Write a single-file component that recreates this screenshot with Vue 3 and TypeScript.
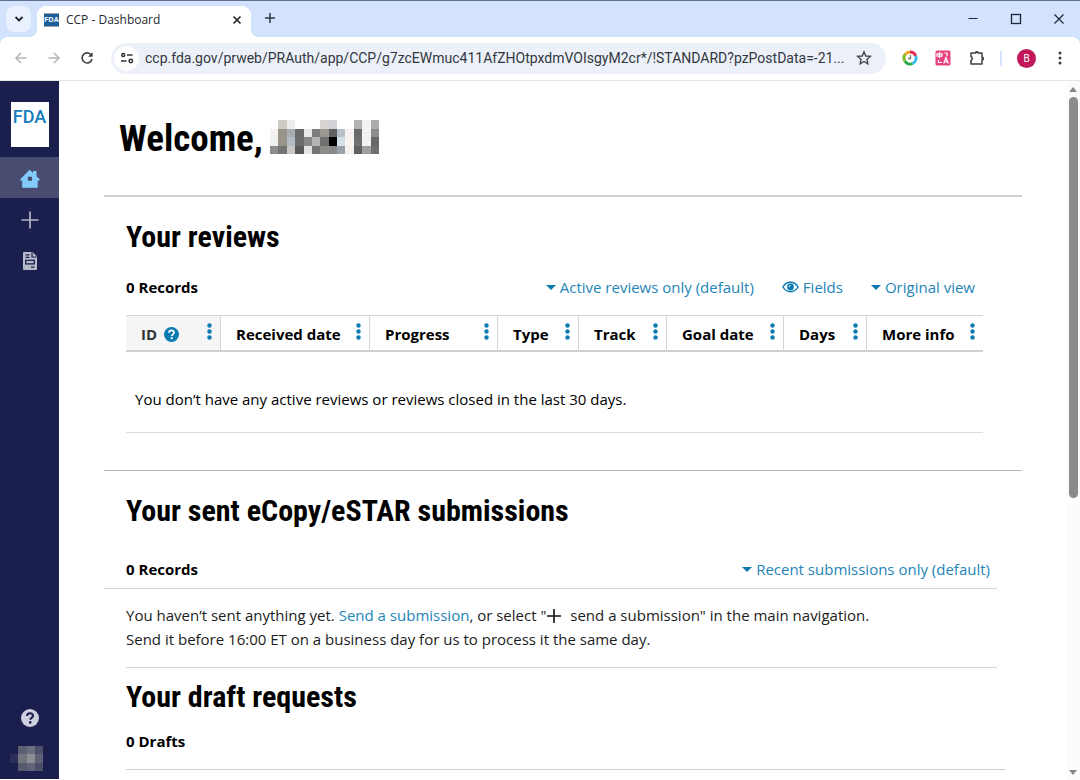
<script setup lang="ts">
import { ref } from 'vue'

interface Column {
  label: string
  width: number
  help?: boolean
}

const address = ref(
  'ccp.fda.gov/prweb/PRAuth/app/CCP/g7zcEWmuc411AfZHOtpxdmVOIsgyM2cr*/!STANDARD?pzPostData=-21...'
)

const columns: Column[] = [
  { label: 'ID', width: 95, help: true },
  { label: 'Received date', width: 149 },
  { label: 'Progress', width: 128 },
  { label: 'Type', width: 81 },
  { label: 'Track', width: 88 },
  { label: 'Goal date', width: 117 },
  { label: 'Days', width: 83 },
  { label: 'More info', width: 116 }
]

const nameTiles: string[][] = [
  ['#ffffff', '#cfcac4', '#ececec', '#ffffff', '#ffffff', '#ffffff', '#d8d4d0', '#d2d2d6', '#ffffff', '#ffffff', '#b2b2b2', '#f2f2f2', '#acacac'],
  ['#f4f2f0', '#999488', '#a8acb0', '#6a6a6a', '#e8e8e8', '#7c7c7c', '#9c9890', '#606060', '#b8c0c8', '#f7f2f0', '#6a6a6a', '#f2f2f2', '#8c8c8c'],
  ['#f0f0f0', '#9a9488', '#b4bcc4', '#6c6c6c', '#888888', '#b4b4b4', '#707070', '#000000', '#d4e0e8', '#faf4f0', '#707070', '#f2f2f2', '#686868'],
  ['#8c8c8c', '#747474', '#c8c8c8', '#585858', '#e4e4e4', '#747474', '#8c8c88', '#888888', '#98a0a8', '#f6f0ec', '#606060', '#a0a0a0', '#707070']
]

const avatarTiles: string[][] = [
  ['#1b1f4e', '#5b5f72', '#6c6f7d', '#4c506a'],
  ['#2c2f58', '#74767f', '#8e8f94', '#5f6274'],
  ['#1b1f4e', '#565a6e', '#62657a', '#4a4e68']
]
</script>

<template>
  <div class="window">
    <header class="tabstrip">
      <button class="tab-search" aria-label="Search tabs">
        <svg width="10" height="10" viewBox="0 0 10 10"><path d="M1.5 3 5 6.500 8.500 3" fill="none" stroke="#1f2430" stroke-width="1.800" /></svg>
      </button>
      <div class="tab">
        <span class="favicon">FDA</span>
        <span class="tab-title">CCP - Dashboard</span>
        <button class="tab-close" aria-label="Close tab">
          <svg width="10" height="10" viewBox="0 0 10 10"><path d="M1.500 1.500 8.500 8.500M8.500 1.500 1.500 8.500" stroke="#202124" stroke-width="1.600" /></svg>
        </button>
      </div>
      <button class="new-tab" aria-label="New tab">
        <svg width="12" height="12" viewBox="0 0 12 12"><path d="M6 1v10M1 6h10" stroke="#30343c" stroke-width="1.500" /></svg>
      </button>
      <div class="controls">
        <button aria-label="Minimize"><svg width="12" height="12" viewBox="0 0 12 12"><path d="M1.500 5.500h9" stroke="#1d2433" /></svg></button>
        <button aria-label="Maximize"><svg width="12" height="12" viewBox="0 0 12 12"><rect x="1.500" y="1.500" width="9" height="9" fill="none" stroke="#1d2433" stroke-width="1.300" /></svg></button>
        <button aria-label="Close"><svg width="12" height="12" viewBox="0 0 12 12"><path d="M1.500 1.500l9 9M10.500 1.500l-9 9" stroke="#1d2433" stroke-width="1.200" /></svg></button>
      </div>
    </header>

    <div class="toolbar">
      <button class="nav-btn" aria-label="Back">
        <svg width="16" height="16" viewBox="0 0 16 16"><path d="M13.500 8H3M8 3 3 8l5 5" fill="none" stroke="#b4b6ba" stroke-width="1.500" /></svg>
      </button>
      <button class="nav-btn" aria-label="Forward">
        <svg width="16" height="16" viewBox="0 0 16 16"><path d="M2.500 8H13M8 3l5 5-5 5" fill="none" stroke="#b4b6ba" stroke-width="1.500" /></svg>
      </button>
      <button class="nav-btn" aria-label="Reload">
        <svg width="16" height="16" viewBox="0 0 16 16"><path d="M12.600 5.800A5 5 0 1 0 13 8.800" fill="none" stroke="#3c4043" stroke-width="1.600" /><path d="M13.600 2.200v4.600H9z" fill="#3c4043" /></svg>
      </button>
      <div class="omnibox">
        <button class="site-info" aria-label="Site information">
          <svg width="14" height="12" viewBox="0 0 14 12" fill="none" stroke="#30343a" stroke-width="1.500"><circle cx="3.200" cy="3" r="1.500" /><path d="M7 3h5.500M1 9h5.500" /><circle cx="10.800" cy="9" r="1.700" /></svg>
        </button>
        <input v-model="address" class="address" type="text" aria-label="Address" spellcheck="false" />
        <button class="star" aria-label="Bookmark">
          <svg width="16" height="16" viewBox="0 0 16 16"><path d="m8 1.800 1.800 4.200 4.500.4-3.400 3 1 4.500L8 11.500l-3.900 2.400 1-4.500-3.400-3 4.500-.4z" fill="none" stroke="#44474c" stroke-width="1.400" /></svg>
        </button>
      </div>
      <div class="extensions">
        <button aria-label="Clock extension">
          <svg width="16" height="16" viewBox="0 0 16 16" fill="none" stroke-width="3">
            <path d="M8 2a6 6 0 0 1 5.700 4" stroke="#e32f51" />
            <path d="M13.700 6A6 6 0 0 1 10.500 13.500" stroke="#35bdf0" />
            <path d="M10.500 13.500A6 6 0 0 1 3 11.200" stroke="#28a745" />
            <path d="M3 11.200A6 6 0 0 1 3.300 4.200" stroke="#7fbd2c" />
            <path d="M3.300 4.200A6 6 0 0 1 8 2" stroke="#f6a51c" />
            <path d="M8.500 5v3.500H6" stroke="#777777" stroke-width="1.300" />
          </svg>
        </button>
        <button aria-label="Translate extension">
          <svg width="16" height="16" viewBox="0 0 16 16" fill="none" stroke="#ffffff" stroke-width="1.200">
            <rect width="15" height="15" x=".5" y=".5" rx="1.500" fill="#e6437f" stroke="none" />
            <path d="M2 3.800h5v2.400H2zM4.500 2v6.300M9.500 3H12v3M3.500 10v2.500H7M8.700 13.500l2.300-6 2.300 6M9.500 11.700h3" />
          </svg>
        </button>
        <button aria-label="Extensions">
          <svg width="18" height="18" viewBox="0 0 18 18"><path d="M3 4h4.200a1.700 1.700 0 0 1 3.200 0H14v4.300a1.400 1.400 0 0 1 0 2.800V15H3v-3.500a2.200 2.200 0 0 0 0-4z" fill="none" stroke="#3c4043" stroke-width="1.500" stroke-linejoin="round" /><path d="M7 4.300a1.800 1.800 0 0 1 3.600 0M13.700 7.800a1.800 1.800 0 0 1 0 3.600" fill="#3c4043" /></svg>
        </button>
      </div>
      <span class="divider"></span>
      <button class="profile" aria-label="Profile">B</button>
      <button class="more" aria-label="Menu">
        <svg width="4" height="14" viewBox="0 0 4 14" fill="#3c4043"><circle cx="2" cy="2" r="1.500" /><circle cx="2" cy="7" r="1.500" /><circle cx="2" cy="12" r="1.500" /></svg>
      </button>
    </div>

    <div class="viewport">
      <nav class="sidebar" aria-label="Main navigation">
        <a class="logo" href="#">FDA</a>
        <a class="nav-item active" href="#" aria-label="Home">
          <svg width="20" height="20" viewBox="0 0 20 20"><path fill-rule="evenodd" d="M9.700.8 13 4V2h3.500v5.200L20 10.400l-.8 1h-1.500V18.700H2.200v-7.300H.6l-.6-1zM7.800 7.700v4h4.200v-4z" fill="#82cbfc" /></svg>
        </a>
        <a class="nav-item" href="#" aria-label="Send a submission">
          <svg width="18" height="18" viewBox="0 0 18 18"><path d="M9 .5v17M.5 9h17" stroke="#b5b7ca" stroke-width="1.700" /></svg>
        </a>
        <a class="nav-item" href="#" aria-label="Documents">
          <svg width="16" height="20" viewBox="0 0 16 20"><path d="M2 1h8.500L15 5.500V18a1 1 0 0 1-1 1H2a1 1 0 0 1-1-1V2a1 1 0 0 1 1-1z" fill="#b9bac8" /><path d="M10 1.500V6h4.500M3.500 3.800h4M3.500 6.300h4M9 16.200h3.500" fill="none" stroke="#1b1f4e" stroke-width="1.200" /><rect x="3.700" y="9.300" width="8.600" height="3.600" fill="none" stroke="#1b1f4e" stroke-width="1.300" /></svg>
        </a>
        <span class="grow"></span>
        <a class="nav-foot" href="#" aria-label="Help">
          <svg width="18" height="18" viewBox="0 0 18 18"><circle cx="9" cy="9" r="9" fill="#cdcfdf" /><path d="M6 7c0-3.700 6-3.700 6-.3 0 2.200-2.700 2-2.700 4.100" fill="none" stroke="#1b1f4e" stroke-width="2.100" /><circle cx="9.200" cy="13.400" r="1.300" fill="#1b1f4e" /></svg>
        </a>
        <a class="nav-foot" href="#" aria-label="Account">
          <svg class="avatar" width="33" height="25" viewBox="0 0 4 3" preserveAspectRatio="none" shape-rendering="crispEdges">
            <template v-for="(row, y) in avatarTiles" :key="y">
              <rect v-for="(fill, x) in row" :key="x" :x="x" :y="y" width="1" height="1" :fill="fill" />
            </template>
          </svg>
        </a>
      </nav>

      <main class="content">
        <h1 class="welcome">
          <span>Welcome,</span>
          <svg width="109" height="34" viewBox="0 0 13 4" preserveAspectRatio="none" shape-rendering="crispEdges" aria-hidden="true">
            <template v-for="(row, y) in nameTiles" :key="y">
              <rect v-for="(fill, x) in row" :key="x" :x="x" :y="y" width="1" height="1" :fill="fill" />
            </template>
          </svg>
        </h1>

        <section class="reviews">
          <h2>Your reviews</h2>
          <div class="bar">
            <strong>0 Records</strong>
            <div class="tools">
              <button class="link"><i class="caret"></i>Active reviews only (default)</button>
              <button class="link">
                <svg width="17" height="12" viewBox="0 0 17 12"><path d="M1 6c3.500-6.300 11.500-6.300 15 0-3.500 6.300-11.500 6.300-15 0z" fill="none" stroke="#0b7ab3" stroke-width="1.500" /><circle cx="8.500" cy="6" r="3.400" fill="#0b7ab3" /><path d="M7 6a1.500 1.500 0 0 1 1.500-1.500" fill="none" stroke="#ffffff" /></svg>Fields
              </button>
              <button class="link"><i class="caret"></i>Original view</button>
            </div>
          </div>
          <table>
            <colgroup>
              <col v-for="c in columns" :key="c.label" :style="{ width: c.width + 'px' }" />
            </colgroup>
            <thead>
              <tr>
                <th v-for="c in columns" :key="c.label" scope="col" :class="{ sorted: c.help }">
                  <div class="cell">
                    <span>{{ c.label }}</span>
                    <button v-if="c.help" class="help" aria-label="About ID">
                      <svg width="15" height="15" viewBox="0 0 18 18"><circle cx="9" cy="9" r="9" fill="#0b7ab3" /><path d="M6 7c0-3.700 6-3.700 6-.3 0 2.200-2.700 2-2.700 4.100" fill="none" stroke="#ffffff" stroke-width="2.100" /><circle cx="9.200" cy="13.400" r="1.300" fill="#ffffff" /></svg>
                    </button>
                    <button class="kebab" :aria-label="c.label + ' menu'">
                      <svg width="5" height="17" viewBox="0 0 5 17" fill="#0b7ab3"><circle cx="2.500" cy="2.500" r="2.200" /><circle cx="2.500" cy="8.500" r="2.200" /><circle cx="2.500" cy="14.500" r="2.200" /></svg>
                    </button>
                  </div>
                </th>
              </tr>
            </thead>
            <tbody>
              <tr>
                <td :colspan="columns.length">You don’t have any active reviews or reviews closed in the last 30 days.</td>
              </tr>
            </tbody>
          </table>
        </section>

        <section class="sent">
          <h2>Your sent eCopy/eSTAR submissions</h2>
          <div class="bar ruled">
            <strong>0 Records</strong>
            <button class="link"><i class="caret"></i>Recent submissions only (default)</button>
          </div>
          <p>
            You haven’t sent anything yet. <a href="#">Send a submission</a>, or select "<svg class="plus" width="16" height="16" viewBox="0 0 16 16"><path d="M8 1v14M1 8h14" stroke="#111111" stroke-width="1.600" /></svg> send a submission" in the main navigation.<br />
            Send it before 16:00 ET on a business day for us to process it the same day.
          </p>
        </section>

        <section class="drafts">
          <h2>Your draft requests</h2>
          <strong>0 Drafts</strong>
        </section>
      </main>

      <div class="scrollbar" aria-hidden="true">
        <i class="arrow up"></i>
        <span class="thumb"></span>
        <span class="rest"></span>
        <i class="arrow down"></i>
      </div>
    </div>
  </div>
</template>

<style>
body {
  margin: 0;
  background: #ffffff;
}
</style>

<style scoped>
* {
  box-sizing: border-box;
}
.window {
  height: 100vh;
  display: flex;
  flex-direction: column;
  overflow: hidden;
  font-family: 'Open Sans', 'Noto Sans', sans-serif;
  font-size: 15px;
  color: #000000;
  background: #d3e2fd;
}
button {
  display: inline-flex;
  align-items: center;
  justify-content: center;
  padding: 0;
  border: 0;
  background: none;
  font: inherit;
  color: inherit;
  flex: none;
}
svg {
  display: block;
  flex: none;
}

/* Browser tab strip */
.tabstrip {
  display: flex;
  flex: none;
  height: 37px;
  padding-left: 6px;
  border-top: 1px solid #5f6f8f;
}
.tab-search {
  width: 25px;
  height: 26px;
  margin-top: 5px;
  border-radius: 8px;
  background: #e9f1fe;
}
.tab {
  position: relative;
  display: flex;
  align-items: center;
  width: 214px;
  height: 31px;
  margin: 5px 0 0 6px;
  padding: 0 7px 4px 7px;
  border-radius: 9px 9px 0 0;
  background: #ffffff;
}
.tab::before,
.tab::after {
  content: '';
  position: absolute;
  bottom: 0;
  width: 8px;
  height: 8px;
}
.tab::before {
  left: -8px;
  background: radial-gradient(circle at 0 0, transparent 8px, #ffffff 8px);
}
.tab::after {
  right: -8px;
  background: radial-gradient(circle at 100% 0, transparent 8px, #ffffff 8px);
}
.favicon {
  width: 15px;
  height: 14px;
  margin-right: 7px;
  overflow: hidden;
  background: #1c5d9c;
  border-top: 1px solid #9aa0a8;
  border-bottom: 1px solid #9aa0a8;
  color: #ffffff;
  font: 700 7px/12px 'Liberation Sans', sans-serif;
  text-align: center;
}
.tab-title {
  flex: 1;
  font-size: 12px;
  line-height: 18px;
  color: #1f2937;
  white-space: nowrap;
}
.tab-close {
  width: 14px;
  height: 14px;
}
.new-tab {
  width: 24px;
  height: 24px;
  margin: 5px 0 0 7px;
}
.controls {
  display: flex;
  margin-left: auto;
}
.controls button {
  width: 43px;
  height: 35px;
}

/* Browser toolbar */
.toolbar {
  display: flex;
  flex: none;
  align-items: center;
  height: 44px;
  padding: 0 10px 1px 4px;
  border-radius: 8px 8px 0 0;
  border-bottom: 1px solid #e4e6ea;
  background: #ffffff;
}
.nav-btn {
  width: 33px;
  height: 32px;
}
.omnibox {
  display: flex;
  align-items: center;
  flex: 1;
  min-width: 0;
  height: 31px;
  margin-left: 8px;
  padding: 0 14px 0 3px;
  border-radius: 16px;
  background: #ecf1f9;
}
.site-info {
  width: 25px;
  height: 25px;
  border-radius: 50%;
  background: #ffffff;
}
.address {
  flex: 1;
  min-width: 0;
  height: 28px;
  margin: 0 4px 0 6px;
  padding: 0;
  border: 0;
  outline: 0;
  background: none;
  font-family: Roboto, sans-serif;
  font-size: 14px;
  color: #33373d;
  text-overflow: ellipsis;
}
.extensions {
  display: flex;
  align-items: center;
  gap: 17px;
  margin: 0 14px 0 16px;
}
.divider {
  width: 2px;
  height: 15px;
  background: #d3e2fd;
}
.profile {
  width: 19px;
  height: 19px;
  margin: 0 14px 0 15px;
  border-radius: 50%;
  background: #c2185b;
  color: #ffffff;
  font: 10px/19px Roboto, sans-serif;
}
.more {
  width: 20px;
  height: 24px;
}

/* Page */
.viewport {
  display: flex;
  flex: 1;
  min-height: 0;
  background: #ffffff;
}
.sidebar {
  display: flex;
  flex-direction: column;
  align-items: center;
  flex: none;
  width: 59px;
  margin-bottom: 1px;
  padding-top: 21px;
  background: #1b1f4e;
}
.logo {
  width: 38px;
  height: 45px;
  margin-bottom: 10px;
  padding-top: 5px;
  background: #ffffff;
  color: #157cbc;
  font: 500 18px/20px Roboto, sans-serif;
  text-align: center;
  text-decoration: none;
}
.nav-item,
.nav-foot {
  display: flex;
  align-items: center;
  justify-content: center;
  width: 100%;
  height: 41px;
}
.nav-item {
  padding-top: 2px;
}
.nav-item.active {
  background: #494c71;
}
.nav-foot {
  height: 40px;
  padding-bottom: 2px;
}
.avatar {
  margin-right: 6px;
}
.grow {
  flex: 1;
}
.content {
  flex: 1;
  min-width: 0;
  overflow: hidden;
  padding: 0 44px 0 45px;
}
h1,
h2 {
  margin: 0;
  font-family: 'Roboto Condensed', 'Liberation Sans Narrow', Roboto, sans-serif;
  font-weight: 700;
}
.welcome {
  display: flex;
  align-items: flex-end;
  gap: 7px;
  height: 116px;
  padding: 0 0 41px 15px;
  border-bottom: 2px solid #cfcfcf;
  font-size: 37px;
  line-height: 30px;
}
h2 {
  font-size: 30px;
  line-height: 36px;
}
strong {
  font-weight: 700;
  font-size: 15px;
  line-height: 24px;
}
.bar {
  display: flex;
  align-items: center;
  justify-content: space-between;
}
.tools {
  display: flex;
  gap: 28px;
}
.link {
  gap: 4px;
  line-height: 24px;
  color: #2385b8;
  white-space: nowrap;
}
.caret {
  border: 5px solid transparent;
  border-top-color: #0b7ab3;
  border-bottom: 0;
}
.reviews {
  padding: 22px 39px 37px 22px;
  border-bottom: 1px solid #b8b8b8;
}
.reviews .bar {
  margin: 20px 0 16px;
  padding-right: 8px;
}
table {
  width: 100%;
  table-layout: fixed;
  border-collapse: separate;
  border-spacing: 0;
}
th {
  height: 37px;
  padding: 0;
  border-top: 1px solid #d6d6d6;
  border-bottom: 2px solid #d0d0d0;
  border-right: 1px solid #d6d6d6;
  text-align: left;
  font-weight: 700;
}
th:last-child {
  border-right: 0;
}
th.sorted {
  background: #f5f5f5;
  color: #333333;
}
.cell {
  display: flex;
  align-items: center;
  height: 34px;
  padding: 2px 8px 0 15px;
  line-height: 24px;
  white-space: nowrap;
}
.help {
  margin-left: 7px;
}
.kebab {
  height: 24px;
  margin: 0 0 5px auto;
}
td {
  height: 81px;
  padding: 14px 9px 0;
  border-bottom: 1px solid #dedede;
  line-height: 24px;
}
.sent {
  padding: 22px 25px 0 0;
}
.sent h2 {
  padding-left: 22px;
}
.ruled {
  margin-top: 28px;
  padding: 0 7px 7px 22px;
  border-bottom: 1px solid #d6d6d6;
}
.sent p {
  margin: 0 0 0 22px;
  padding: 14px 0 16px;
  border-bottom: 1px solid #d6d6d6;
  line-height: 24px;
  color: #1c1c1c;
}
.sent p a {
  color: #2385b8;
  text-decoration: none;
}
.plus {
  display: inline-block;
  margin-right: 4px;
  vertical-align: -3px;
}
.drafts {
  margin: 0 17px 0 22px;
  padding: 11px 0 16px;
  border-bottom: 1px solid #d0d0d0;
}
.drafts strong {
  display: block;
  margin-top: 14px;
}

/* Scroll bar */
.scrollbar {
  display: flex;
  flex-direction: column;
  align-items: center;
  flex: none;
  width: 14px;
  padding: 6px 0 5px;
  background: #fcfcfc;
}
.arrow {
  border: 4px solid transparent;
}
.arrow.up {
  border-top: 0;
  border-bottom: 5px solid #858585;
  margin-bottom: 5px;
}
.arrow.down {
  border-bottom: 0;
  border-top: 5px solid #858585;
}
.thumb {
  flex: 25;
  width: 9px;
  border-radius: 5px;
  background: #8b8b8b;
}
.rest {
  flex: 17;
}
</style>
